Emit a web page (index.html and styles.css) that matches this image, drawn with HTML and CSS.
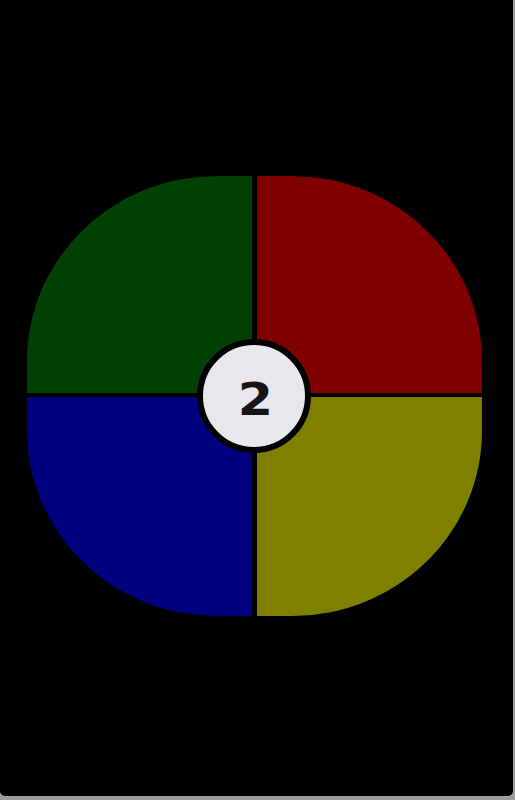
FILE: index.html
```html
<!DOCTYPE html>
<html>
<head>
<meta charset="utf-8">
<link rel="stylesheet" href="styles.css">
</head>
<body>
<div class="screen">
  <div class="board">
    <div class="pad green"></div>
    <div class="pad red"></div>
    <div class="pad blue"></div>
    <div class="pad yellow"></div>
    <div class="hub"><span class="count">2</span></div>
  </div>
</div>
</body>
</html>
```
FILE: styles.css
```css
html, body {
  margin: 0;
  padding: 0;
  width: 515px;
  height: 800px;
  overflow: hidden;
  background: #9c9c9e;
}
.screen {
  width: 513px;
  height: 796px;
  background: #000;
  border-radius: 0 0 5px 5px;
  box-sizing: border-box;
  padding: 176px 0 0 27px;
}
.board {
  position: relative;
  width: 455px;
  height: 440px;
  display: grid;
  grid-template-columns: 225px 225px;
  grid-template-rows: 217px 219px;
  column-gap: 5px;
  row-gap: 4px;
}
.pad { width: 100%; height: 100%; }
.green { background: #024104; border-top-left-radius: 190px 185px; }
.red { background: #800000; border-top-right-radius: 190px 185px; }
.blue { background: #00007e; border-bottom-left-radius: 190px 185px; }
.yellow { background: #808000; border-bottom-right-radius: 190px 185px; }
.hub {
  position: absolute;
  left: 170px;
  top: 163px;
  width: 102px;
  height: 102px;
  border: 6px solid #000;
  border-radius: 50%;
  background: #e9e7ec;
  display: flex;
  align-items: center;
  justify-content: center;
}
.count {
  font-family: "DejaVu Sans", sans-serif;
  font-weight: bold;
  font-size: 44px;
  line-height: 1;
  color: #151515;
  transform: translate(1px, 4px) scaleX(1.15);
}
```
